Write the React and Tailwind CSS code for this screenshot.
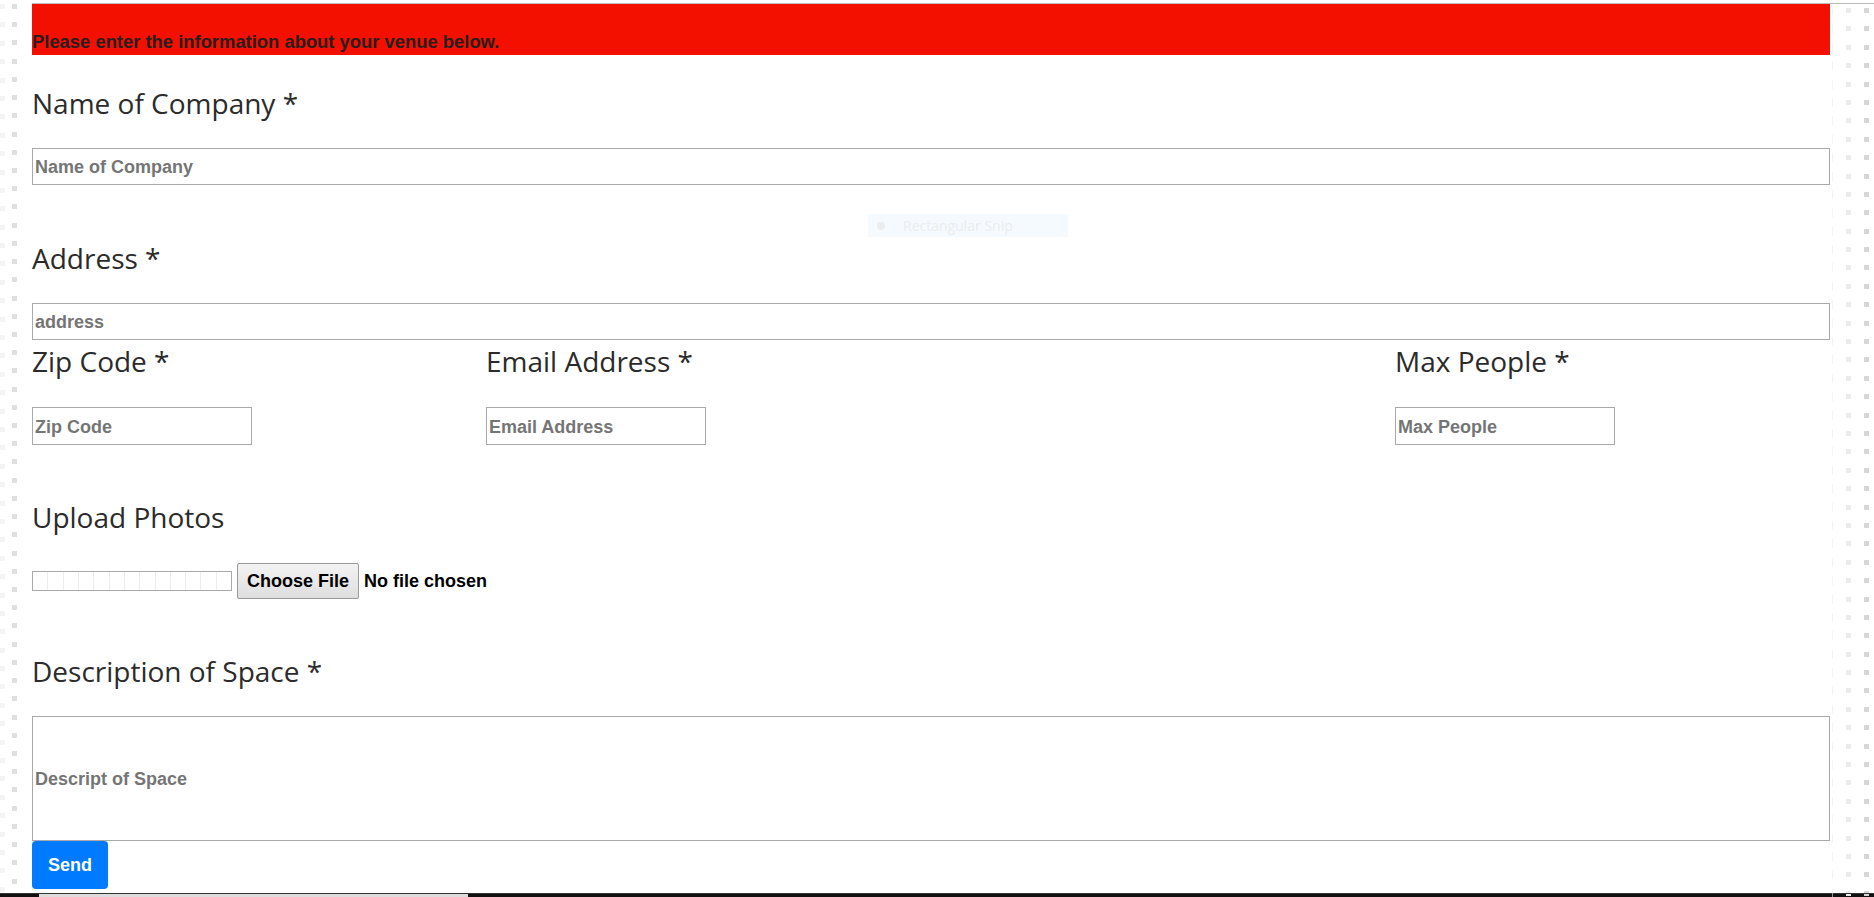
import React from 'react';

const DotColumn = ({ tone }) => (
  <div className="flex flex-col">
    {Array.from({ length: 49 }).map((_, i) => (
      <div key={i} className="h-[18.4px] pt-[4px]">
        <div className={`w-[5px] h-[5px] ${tone}`} />
      </div>
    ))}
  </div>
);

const Label = ({ children, className = '' }) => (
  <div className={`h-[40px] leading-[40px] text-[28px] text-[#2b2b2b] font-['Open_Sans',sans-serif] whitespace-nowrap ${className}`}>
    {children}
  </div>
);

const fieldCls =
  "block border border-[#a9a9a9] bg-white px-[2px] pt-[2px] text-[18px] font-bold font-['Liberation_Sans',Arial,sans-serif] text-[#333] placeholder:text-[#757575] placeholder:font-bold outline-none";

export default function App() {
  return (
    <div className="w-full h-[897px] bg-white overflow-hidden relative">
      <div className="flex h-[893px]">
        {/* left gutter */}
        <div className="w-[32px] shrink-0 flex gap-[10px]">
          <div className="w-[2px] opacity-40">
            <DotColumn tone="bg-[#e6e6e6]" />
          </div>
          <DotColumn tone="bg-[#e0e0e0]" />
        </div>

        <div className="flex-1 flex mt-[3px] border-t border-[#bdbdbd]">
          {/* form */}
          <main className="flex-1 flex flex-col">
            <div className="h-[51px] bg-[#f41000] flex items-end pb-[4px]">
              <p className="text-[18.4px] font-bold text-[#2a1d1d] font-['Liberation_Sans',Arial,sans-serif] leading-none">
                Please enter the information about your venue below.
              </p>
            </div>

            <Label className="mt-[28px]">Name of Company *</Label>
            <input className={`${fieldCls} w-full h-[37px] mt-[25px]`} placeholder="Name of Company" />

            <Label className="mt-[53px]">Address *</Label>
            <input className={`${fieldCls} w-full h-[37px] mt-[25px]`} placeholder="address" />

            <div className="grid grid-cols-[454px_909px_1fr] mt-[1px]">
              <div>
                <Label>Zip Code *</Label>
                <input className={`${fieldCls} w-[220px] h-[38px] mt-[26px]`} placeholder="Zip Code" />
              </div>
              <div>
                <Label>Email Address *</Label>
                <input className={`${fieldCls} w-[220px] h-[38px] mt-[26px]`} placeholder="Email Address" />
              </div>
              <div>
                <Label>Max People *</Label>
                <input className={`${fieldCls} w-[220px] h-[38px] mt-[26px]`} placeholder="Max People" />
              </div>
            </div>

            <Label className="mt-[52px]">Upload Photos</Label>
            <div className="flex items-center mt-[26px] h-[36px] font-['Liberation_Sans',Arial,sans-serif]">
              <div className="w-[200px] h-[20px] border border-[#aaa] flex">
                {Array.from({ length: 13 }).map((_, i) => (
                  <div key={i} className="flex-1 border-r border-[#ececec] last:border-r-0" />
                ))}
              </div>
              <button className="ml-[5px] w-[122px] h-[36px] border border-[#999] rounded-[2px] bg-gradient-to-b from-[#f3f3f3] to-[#dedede] text-[18px] font-bold text-black">
                Choose File
              </button>
              <span className="ml-[5px] text-[18px] font-bold text-black">No file chosen</span>
            </div>

            <Label className="mt-[52px]">Description of Space *</Label>
            <input className={`${fieldCls} w-full h-[125px] mt-[25px]`} placeholder="Descript of Space" />

            <button className="w-[76px] h-[48px] bg-[#007bff] rounded-[4px] text-white text-[18px] font-bold font-['Liberation_Sans',Arial,sans-serif]">
              Send
            </button>
          </main>

          {/* right gutter */}
          <div className="w-[44px] shrink-0 flex">
            <div className="ml-[2px] w-[1px] opacity-60">
              <div className="flex flex-col">
                {Array.from({ length: 49 }).map((_, i) => (
                  <div key={i} className="h-[18.4px] pt-[2px]">
                    <div className="w-[1px] h-[9px] bg-[#ececec]" />
                  </div>
                ))}
              </div>
            </div>
            <div className="ml-[13px]">
              <DotColumn tone="bg-[#ebebeb]" />
            </div>
            <div className="ml-[13px]">
              <DotColumn tone="bg-[#d6d6d6]" />
            </div>
          </div>
        </div>
      </div>

      {/* bottom strip */}
      <div className="h-[4px] bg-[#111] flex flex-col">
        <div className="h-[1px] bg-[#333]" />
        <div className="h-[3px] ml-[39px] w-[429px] bg-[#dcdcdc]" />
      </div>

      {/* faint snip tooltip over the form */}
      <div className="absolute left-[868px] top-[214px] w-[200px] h-[23px] bg-[#f5faff] flex items-center gap-[18px] pl-[9px] text-[14px] text-[#ececec] font-['Open_Sans',sans-serif]">
        <span className="w-[8px] h-[8px] rounded-full bg-[#ececec]" />
        Rectangular Snip
      </div>
    </div>
  );
}
